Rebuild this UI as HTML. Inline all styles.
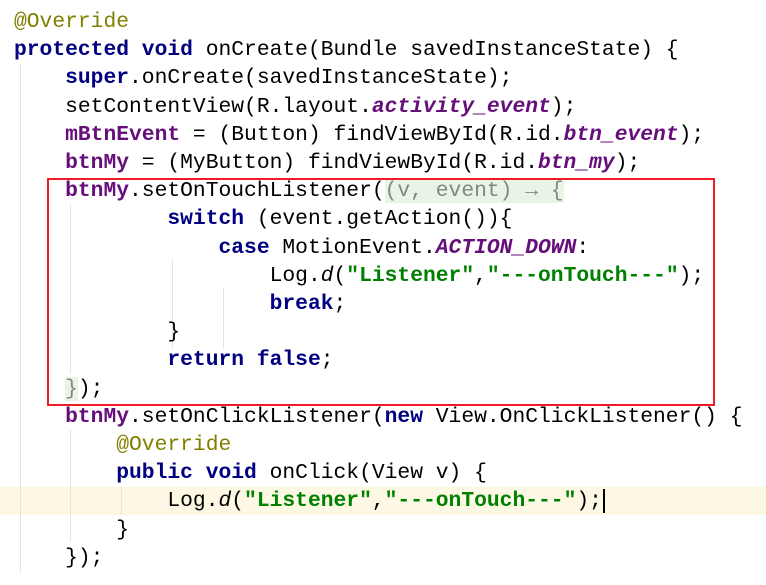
<!DOCTYPE html>
<html><head><meta charset="utf-8"><style>
html,body{margin:0;padding:0;background:#fff;width:766px;height:585px;overflow:hidden}
pre{position:absolute;left:14px;top:8px;margin:0;font-family:"Liberation Mono","DejaVu Sans Mono",monospace;font-size:21.3px;line-height:28.2px;color:#000;z-index:2}
.k{color:#000080;font-weight:bold}
.f{color:#660e7a;font-weight:bold}
.fi{color:#660e7a;font-weight:bold;font-style:italic}
.s{color:#008000;font-weight:bold}
.a{color:#808000}
.i{font-style:italic}
.l{color:#7f8a7f;background:#e9f3e6}
.g{position:absolute;width:1px;background:#e4e4e4;z-index:1}
</style></head><body>
<div style="position:absolute;left:0;top:487px;width:766px;height:28px;background:#fdf8e4"></div>
<div class="g" style="left:20px;top:64px;height:508px"></div>
<div class="g" style="left:70px;top:204px;height:170px"></div>
<div class="g" style="left:172px;top:260px;height:88px"></div>
<div class="g" style="left:223px;top:288px;height:60px"></div>
<div class="g" style="left:70px;top:430px;height:112px"></div>
<div class="g" style="left:121px;top:487px;height:28px"></div>
<pre><span class="a">@Override</span>
<span class="k">protected void</span> onCreate(Bundle savedInstanceState) {
    <span class="k">super</span>.onCreate(savedInstanceState);
    setContentView(R.layout.<span class="fi">activity_event</span>);
    <span class="f">mBtnEvent</span> = (Button) findViewById(R.id.<span class="fi">btn_event</span>);
    <span class="f">btnMy</span> = (MyButton) findViewById(R.id.<span class="fi">btn_my</span>);
    <span class="f">btnMy</span>.setOnTouchListener(<span class="l">(v, event) → {</span>
            <span class="k">switch</span> (event.getAction()){
                <span class="k">case</span> MotionEvent.<span class="fi">ACTION_DOWN</span>:
                    Log.<span class="i">d</span>(<span class="s">"Listener"</span>,<span class="s">"---onTouch---"</span>);
                    <span class="k">break</span>;
            }
            <span class="k">return false</span>;
    <span class="l">}</span>);
    <span class="f">btnMy</span>.setOnClickListener(<span class="k">new</span> View.OnClickListener() {
        <span class="a">@Override</span>
        <span class="k">public void</span> onClick(View v) {
            Log.<span class="i">d</span>(<span class="s">"Listener"</span>,<span class="s">"---onTouch---"</span>);
        }
    });</pre>
<div style="position:absolute;left:603px;top:489px;width:2px;height:24px;background:#000;z-index:3"></div>
<div style="position:absolute;left:47px;top:178px;width:664px;height:224px;border:2px solid #ee1c25;z-index:3"></div>
</body></html>
